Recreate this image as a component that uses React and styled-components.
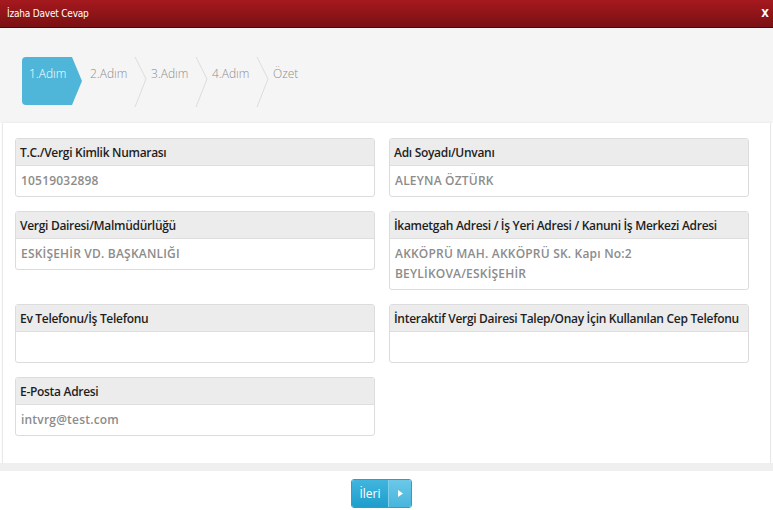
import React from 'react';
import styled, { createGlobalStyle } from 'styled-components';

const GlobalStyle = createGlobalStyle`
  html, body { margin: 0; padding: 0; background: #ffffff; }
  body { font-family: "Open Sans", "Liberation Sans", sans-serif; }
`;

const Modal = styled.div`
  width: 773px;
  height: 510px;
  display: flex;
  flex-direction: column;
  background: #ffffff;
  overflow: hidden;
`;

const TitleBar = styled.div`
  height: 27px;
  flex: none;
  display: flex;
  align-items: center;
  justify-content: space-between;
  padding: 0 4px 0 7px;
  background: linear-gradient(#a5191e, #7a1013);
  border-bottom: 1px solid #4e0709;
  color: #ffffff;
`;

const Title = styled.span`
  font-family: "DejaVu Sans", sans-serif;
  font-stretch: condensed;
  font-size: 10px;
  letter-spacing: -0.2px;
`;

const Close = styled.span`
  font-family: "DejaVu Sans", sans-serif;
  font-stretch: condensed;
  font-weight: bold;
  font-size: 11px;
`;

const WizardArea = styled.div`
  height: 95px;
  flex: none;
  background: #f5f5f5;
  padding: 29px 0 0 22px;
  box-sizing: border-box;
`;

const Steps = styled.div`
  display: flex;
  height: 48px;
`;

const Step = styled.div`
  position: relative;
  width: 61px;
  height: 48px;
  box-sizing: border-box;
  padding: 8px 0 0 7px;
  font-size: 12px;
  font-weight: 300;
  color: ${p => (p.$active ? '#ffffff' : '#8e8e8e')};
  background: ${p => (p.$active ? '#4fb6da' : 'transparent')};
  border-radius: ${p => (p.$active ? '4px 0 0 4px' : '0')};
  clip-path: ${p => (p.$active ? 'polygon(0 0, 50px 0, 60px 50%, 50px 100%, 0 100%)' : 'none')};
`;

const Divider = styled.svg`
  position: absolute;
  right: -4px;
  top: 0;
`;

const Panel = styled.div`
  flex: none;
  margin: 0 2px;
  background: #ffffff;
  border-left: 1px solid #e8e8e8;
  border-right: 1px solid #e8e8e8;
  padding: 15px 12px 27px 12px;
  box-shadow: 0 -1px 2px rgba(0, 0, 0, 0.04);
`;

const Grid = styled.div`
  display: grid;
  grid-template-columns: 360px 360px;
  column-gap: 14px;
  row-gap: 14px;
  align-items: start;
`;

const Card = styled.div`
  border: 1px solid #dcdcdc;
  border-radius: 3px;
  background: #ffffff;
  overflow: hidden;
`;

const CardHead = styled.div`
  height: 26px;
  background: #ececec;
  border-bottom: 1px solid #dedede;
  padding: 0 4px;
  display: flex;
  align-items: center;
  font-size: 12px;
  font-weight: 600;
  color: #1e1e1e;
  letter-spacing: -0.3px;
`;

const CardBody = styled.div`
  min-height: 20px;
  padding: 5px;
  font-size: 12px;
  line-height: 20px;
  color: #8c8c8c;
  font-weight: 600;
  letter-spacing: 0.2px;
`;

const Band = styled.div`
  height: 8px;
  flex: none;
  background: #efefef;
`;

const Footer = styled.div`
  flex: 1;
  display: flex;
  justify-content: center;
  padding: 8px 10px 0 0;
`;

const NextButton = styled.button`
  height: 29px;
  display: flex;
  padding: 0;
  border: 1px solid #2a9fcb;
  border-radius: 3px;
  overflow: hidden;
  cursor: pointer;
  background: none;
`;

const NextLabel = styled.span`
  width: 36px;
  display: flex;
  align-items: center;
  justify-content: center;
  background: linear-gradient(#40b6de, #1f9dcc);
  color: #ffffff;
  font-family: "Open Sans", sans-serif;
  font-size: 12px;
`;

const NextIcon = styled.span`
  width: 22px;
  display: flex;
  align-items: center;
  justify-content: center;
  background: linear-gradient(#6ac8e8, #48b5dc);
  border-left: 1px solid #7fd0ec;
`;

const steps = ['1.Adım', '2.Adım', '3.Adım', '4.Adım', 'Özet'];

const fields = [
  { label: 'T.C./Vergi Kimlik Numarası', value: '10519032898' },
  { label: 'Adı Soyadı/Unvanı', value: 'ALEYNA ÖZTÜRK' },
  { label: 'Vergi Dairesi/Malmüdürlüğü', value: 'ESKİŞEHİR VD. BAŞKANLIĞI' },
  { label: 'İkametgah Adresi / İş Yeri Adresi / Kanuni İş Merkezi Adresi', value: ['AKKÖPRÜ MAH. AKKÖPRÜ SK. Kapı No:2', 'BEYLİKOVA/ESKİŞEHİR'] },
  { label: 'Ev Telefonu/İş Telefonu', value: '' },
  { label: 'İnteraktif Vergi Dairesi Talep/Onay İçin Kullanılan Cep Telefonu', value: '' },
  { label: 'E-Posta Adresi', value: 'intvrg@test.com' },
];

export default function App() {
  return (
    <Modal>
      <GlobalStyle />
      <TitleBar>
        <Title>İzaha Davet Cevap</Title>
        <Close>X</Close>
      </TitleBar>

      <WizardArea>
        <Steps>
          {steps.map((s, i) => (
            <Step key={s} $active={i === 0}>
              {s}
              {i > 0 && i < steps.length - 1 && (
                <Divider width="14" height="50" viewBox="0 0 14 50">
                  <path d="M1 0 L12 22 L1 50" fill="none" stroke="#dcdcdc" strokeWidth="1" />
                </Divider>
              )}
            </Step>
          ))}
        </Steps>
      </WizardArea>

      <Panel>
        <Grid>
          {fields.map(f => (
            <Card key={f.label}>
              <CardHead>{f.label}</CardHead>
              <CardBody>
                {Array.isArray(f.value)
                  ? f.value.map(line => <div key={line}>{line}</div>)
                  : f.value}
              </CardBody>
            </Card>
          ))}
        </Grid>
      </Panel>

      <Band />

      <Footer>
        <NextButton>
          <NextLabel>İleri</NextLabel>
          <NextIcon>
            <svg width="5" height="7" viewBox="0 0 5 7">
              <path d="M0 0 L5 3.5 L0 7 Z" fill="#ffffff" />
            </svg>
          </NextIcon>
        </NextButton>
      </Footer>
    </Modal>
  );
}
